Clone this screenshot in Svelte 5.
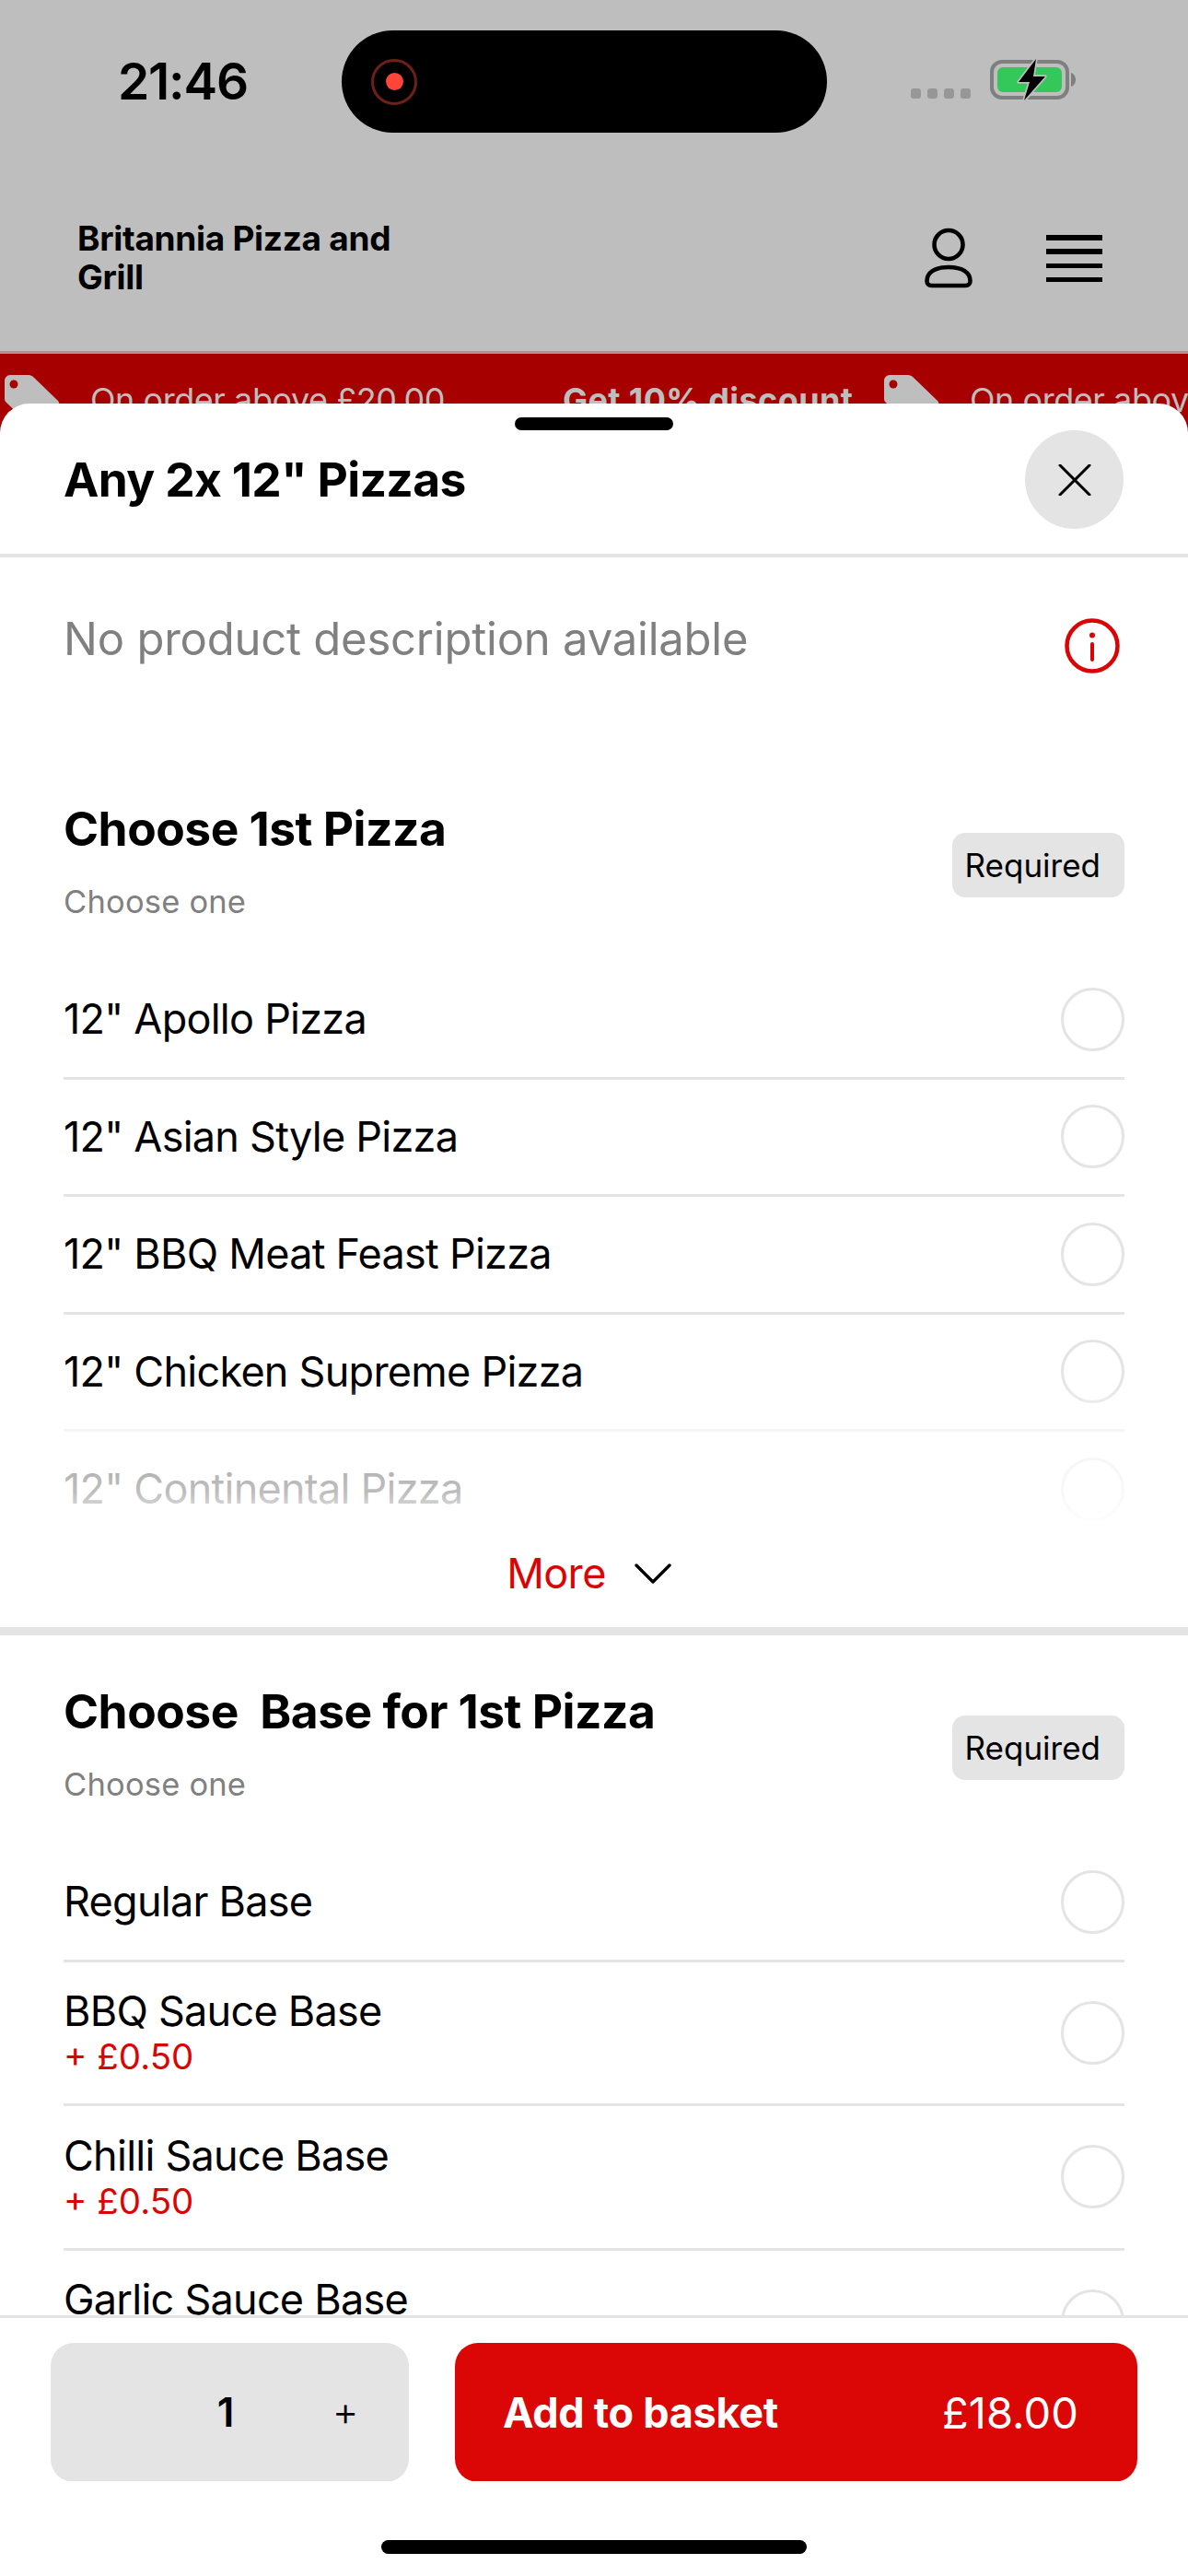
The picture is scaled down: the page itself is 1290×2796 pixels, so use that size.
<script>
  const group1 = ['12" Apollo Pizza', '12" Asian Style Pizza', '12" BBQ Meat Feast Pizza', '12" Chicken Supreme Pizza', '12" Continental Pizza'];
  const group2 = [
    { name: 'Regular Base', price: '' },
    { name: 'BBQ Sauce Base', price: '+ £0.50' },
    { name: 'Chilli Sauce Base', price: '+ £0.50' },
    { name: 'Garlic Sauce Base', price: '+ £0.50' }
  ];
  const promos = [0, 1];
</script>

<div class="phone">
  <div class="status">
    <span class="time">21:46</span>
    <div class="island">
      <span class="rec"><span class="rec-dot"></span></span>
    </div>
    <div class="status-right">
      <div class="signal"><i></i><i></i><i></i><i></i></div>
      <svg class="battery" width="98" height="52" viewBox="0 0 98 52">
        <rect x="3" y="7" width="82" height="39" rx="11" fill="none" stroke="#7f7f7f" stroke-width="4"/>
        <rect x="9" y="13" width="70" height="27" rx="6" fill="#34c759"/>
        <path d="M89 19c3 1 5 4 5 7.500s-2 6.500-5 7.500z" fill="#7f7f7f"/>
        <path d="M51 4 L32 29 H44 L38 49 L61 23 H48 Z" fill="#000" stroke="#bebebe" stroke-width="3.5" stroke-linejoin="round" paint-order="stroke"/>
      </svg>
    </div>
  </div>

  <header class="head">
    <div class="brand">Britannia Pizza and<br />Grill</div>
    <svg class="user" width="54" height="68" viewBox="0 0 54 68">
      <circle cx="27" cy="19.500" r="15.500" fill="none" stroke="#000" stroke-width="4.600"/>
      <path d="M3.500 59c0-9 8-15 23.500-15s23.500 6 23.500 15c0 3-2 5-5 5H8.500c-3 0-5-2-5-5z" fill="none" stroke="#000" stroke-width="4.600"/>
    </svg>
    <div class="menu"><i></i><i></i><i></i><i></i></div>
  </header>

  <div class="banner">
    {#each promos as p}
      <div class="promo">
        <svg class="tag" width="60" height="60" viewBox="0 0 60 60">
          <path d="M6 0H26c2 0 4 1 5 2L58 28c2 2 2 5 0 7L38 58c-2 2-5 2-7 0L2 30c-1-1-2-2-2-4V6C0 3 3 0 6 0z" fill="#bebebe"/>
          <circle cx="10" cy="10" r="4.500" fill="#a60000"/>
        </svg>
        <span class="promo-text">On order above £20.00</span>
        {#if p === 0}<b class="promo-bold">Get 10% discount</b>{/if}
      </div>
    {/each}
  </div>

  <section class="sheet">
    <div class="handle"></div>
    <div class="sheet-head">
      <h1>Any 2x 12" Pizzas</h1>
      <button class="close" aria-label="Close">
        <svg width="36" height="34" viewBox="0 0 36 34"><path d="M2 1 L34 33 M34 1 L2 33" stroke="#000" stroke-width="3" stroke-linecap="round"/></svg>
      </button>
    </div>

    <div class="body">
      <div class="desc">
        <p>No product description available</p>
        <svg class="info" width="60" height="60" viewBox="0 0 60 60">
          <circle cx="30" cy="30" r="27.500" fill="none" stroke="#d90505" stroke-width="4.500"/>
          <circle cx="30" cy="18.500" r="3" fill="#d90505"/>
          <path d="M30 28v17" stroke="#d90505" stroke-width="4" stroke-linecap="round"/>
        </svg>
      </div>

      <div class="group">
        <div class="group-head">
          <div>
            <h2>Choose 1st Pizza</h2>
            <div class="hint">Choose one</div>
          </div>
          <span class="badge">Required</span>
        </div>
        <div class="rows clipped">
          {#each group1 as name}
            <div class="row"><span class="name">{name}</span><span class="radio"></span></div>
          {/each}
          <div class="fade"></div>
        </div>
        <div class="more">
          <span>More</span>
          <svg width="40" height="22" viewBox="0 0 40 22"><path d="M2 2 L20 20 L38 2" fill="none" stroke="#000" stroke-width="3.400" stroke-linecap="round" stroke-linejoin="round"/></svg>
        </div>
      </div>

      <div class="group">
        <div class="group-head">
          <div>
            <h2>Choose&nbsp; Base for 1st Pizza</h2>
            <div class="hint">Choose one</div>
          </div>
          <span class="badge">Required</span>
        </div>
        <div class="rows">
          {#each group2 as item}
            <div class="row" class:priced={item.price}>
              <div class="name-col">
                <span class="name">{item.name}</span>
                {#if item.price}<span class="price">{item.price}</span>{/if}
              </div>
              <span class="radio"></span>
            </div>
          {/each}
        </div>
      </div>
    </div>

    <footer class="foot">
      <div class="stepper">
        <span class="qty">1</span>
        <span class="plus">+</span>
      </div>
      <button class="add">
        <b>Add to basket</b>
        <span>£18.00</span>
      </button>
    </footer>
    <div class="home-wrap"><div class="home"></div></div>
  </section>
</div>

<style>
  :global(body) { margin: 0; background: #bebebe; }
  .phone {
    width: 1290px; height: 2796px; position: relative; overflow: hidden;
    background: #bebebe; color: #000;
    font-family: Inter, "Liberation Sans", sans-serif;
  }
  .status { height: 178px; box-sizing: border-box; padding-top: 33px; display: flex; align-items: flex-start; }
  .time { width: 371px; box-sizing: border-box; padding: 22px 0 0 128px; font-size: 55px; line-height: 66px; font-weight: 600; letter-spacing: -1.2px; }
  .island { width: 527px; height: 111px; border-radius: 56px; background: #000; display: flex; align-items: center; padding-left: 32px; box-sizing: border-box; }
  .rec { width: 50px; height: 50px; border-radius: 50%; border: 3.5px solid #6e2018; box-sizing: border-box; display: flex; align-items: center; justify-content: center; }
  .rec-dot { width: 19px; height: 19px; border-radius: 50%; background: #ff453a; }
  .status-right { display: flex; align-items: flex-start; margin-left: 91px; padding-top: 27px; }
  .signal { display: flex; gap: 7px; margin-top: 36px; margin-right: 20px; }
  .signal i { width: 11px; height: 11px; border-radius: 3px; background: #979797; }
  .battery { display: block; }

  .head { height: 203px; box-sizing: border-box; display: flex; align-items: flex-start; padding: 60px 93px 0 84px; }
  .brand { font-size: 37px; line-height: 41.5px; font-weight: 700; flex: 1; letter-spacing: -0.3px; }
  .user { margin: 8px 79px 0 0; display: block; }
  .menu { display: flex; flex-direction: column; gap: 9.8px; width: 61px; padding-top: 17px; }
  .menu i { display: block; height: 5.5px; background: #000; }

  .banner { height: 120px; background: #a60000; border-top: 3px solid #b59090; box-sizing: border-box; display: flex; padding: 23px 0 0 5px; overflow: hidden; }
  .promo { display: flex; align-items: flex-start; flex: none; color: #bebebe; font-size: 36px; line-height: 44px; width: 955px; }
  .tag { flex: none; margin-right: 33px; display: block; }
  .promo-text { white-space: nowrap; width: 513px; flex: none; padding-top: 5px; letter-spacing: -0.45px; }
  .promo-bold { white-space: nowrap; font-weight: 700; padding-top: 5px; letter-spacing: 0.4px; }

  .sheet {
    position: absolute; left: 0; right: 0; top: 438px; bottom: 0;
    background: #fff; border-radius: 32px 32px 0 0;
    display: flex; flex-direction: column;
  }
  .handle { position: absolute; top: 15px; left: 559px; width: 172px; height: 14px; border-radius: 7px; background: #000; }
  .sheet-head { height: 167px; flex: none; box-sizing: border-box; border-bottom: 4px solid #e4e4e4; display: flex; align-items: flex-start; justify-content: space-between; padding: 29px 70px 0 69px; }
  h1 { margin: 0; font-size: 51.5px; line-height: 107px; font-weight: 700; letter-spacing: -0.65px; }
  .close { width: 107px; height: 107px; border-radius: 50%; background: #e4e4e4; border: 0; padding: 0; display: flex; align-items: center; justify-content: center; }
  .close svg { display: block; }

  .body { flex: 1; min-height: 0; overflow: hidden; }
  .desc { height: 212px; box-sizing: border-box; display: flex; justify-content: space-between; align-items: flex-start; padding: 59px 74px 0 69px; }
  .desc p { margin: 0; font-size: 49px; line-height: 60px; color: #808080; font-weight: 400; letter-spacing: -0.23px; }
  .info { margin-top: 7px; display: block; }

  .group { padding-top: 43px; }
  .group-head { height: 184px; box-sizing: border-box; padding: 0 69px; display: flex; justify-content: space-between; align-items: flex-start; }
  h2 { margin: 0; font-size: 51.5px; line-height: 78px; font-weight: 700; letter-spacing: -0.5px; }
  .hint { margin-top: 19px; font-size: 34.5px; line-height: 44px; color: #808080; letter-spacing: 0.2px; }
  .badge { margin-top: 44px; height: 70px; padding: 0 26px 0 14px; border-radius: 14px; background: #e4e4e4; font-size: 35px; line-height: 70px; letter-spacing: 0; }

  .rows { margin: 0 69px; position: relative; }
  .rows.clipped { height: 622px; overflow: hidden; }
  .row { height: 127.5px; box-sizing: border-box; border-bottom: 3px solid #e4e4e4; display: flex; align-items: center; justify-content: space-between; }
  .row.priced { height: 156.5px; }
  .name { font-size: 45px; line-height: 52px; letter-spacing: -0.75px; }
  .name-col { display: flex; flex-direction: column; }
  .price { font-size: 38.5px; line-height: 46px; color: #d90505; letter-spacing: 0; }
  .radio { width: 69px; height: 69px; box-sizing: border-box; border-radius: 50%; border: 3px solid #e4e4e4; flex: none; background: #fff; }
  .fade { position: absolute; left: 0; right: 0; bottom: 0; height: 166px; background: linear-gradient(rgba(255,255,255,0) 0%, rgba(255,255,255,0.65) 31%, rgba(255,255,255,0.74) 72%, rgba(255,255,255,0.92) 90%); }

  .more { height: 109px; box-sizing: border-box; border-bottom: 9px solid #e4e4e4; display: flex; align-items: center; justify-content: center; gap: 31px; padding: 0 11px 18px 0; font-size: 45px; color: #d90505; letter-spacing: -0.6px; }
  .more svg { display: block; margin-top: 2px; }

  .foot { flex: none; position: absolute; left: 0; right: 0; top: 2075px; height: 180px; box-sizing: border-box; background: #fff; border-top: 3px solid #e4e4e4; display: flex; gap: 50px; padding: 27px 55px 0; }
  .stepper { width: 389px; height: 151px; border-radius: 25px; background: #e4e4e4; position: relative; display: flex; align-items: center; }
  .qty { position: absolute; left: 190px; top: 50%; transform: translate(-50%, -52%); font-size: 44px; font-weight: 600; }
  .plus { position: absolute; left: 320px; top: 50%; transform: translate(-50%, -54%); font-size: 44px; font-weight: 300; }
  .add { width: 741px; height: 151px; border-radius: 25px; background: #db0606; color: #fff; border: 0; display: flex; align-items: center; justify-content: space-between; padding: 0 64px 0 52px; font-family: inherit; font-size: 45px; }
  .add b { font-weight: 700; letter-spacing: -0.3px; }
  .add span { font-size: 47px; letter-spacing: 0.1px; }
  .home-wrap { position: absolute; left: 0; right: 0; top: 2255px; bottom: 0; background: #fff; display: flex; justify-content: center; padding-top: 64px; box-sizing: border-box; }
  .home { width: 462px; height: 15px; border-radius: 8px; background: #000; }
</style>
